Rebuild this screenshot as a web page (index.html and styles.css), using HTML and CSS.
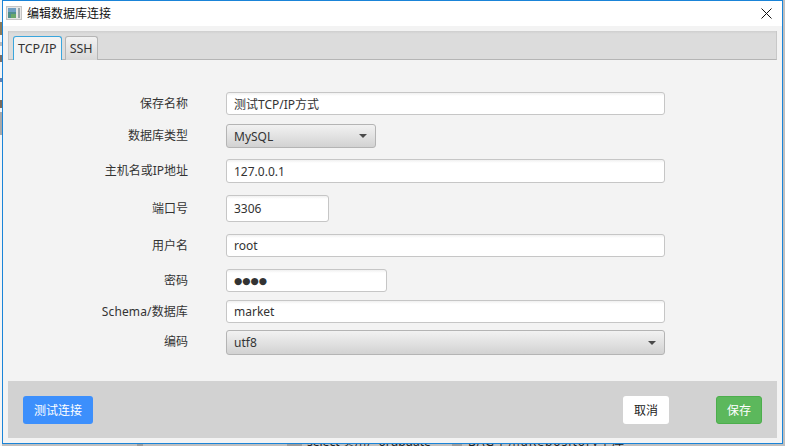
FILE: index.html
```html
<!DOCTYPE html>
<html lang="zh">
<head>
<meta charset="utf-8">
<title>编辑数据库连接</title>
<link rel="stylesheet" href="styles.css">
</head>
<body>
<div class="desktop" aria-hidden="true">
  <span class="bg-left bg-left-1"></span>
  <span class="bg-left bg-left-2"></span>
  <span class="bg-left bg-left-3"></span>
  <span class="bg-left bg-left-a"></span>
  <span class="bg-left bg-left-b"></span>
  <span class="bg-left bg-left-c"></span>
  <span class="bg-code bg-code-a">select 实用户orupdate</span>
  <span class="bg-code bg-code-b">BAG主用aRepository中库</span>
  <span class="bg-cell bg-cell-a"></span>
  <span class="bg-cell bg-cell-b"></span>
  <span class="bg-cell bg-cell-c"></span>
</div>
<div class="window">
  <header class="titlebar">
    <svg class="app-icon" width="16" height="16" viewBox="0 0 16 16">
      <rect x="0.5" y="1.5" width="15" height="13" fill="#e6e6e6" stroke="#c4c4c4"/>
      <rect x="2" y="3" width="8" height="10" fill="#4f8f8c"/>
      <rect x="2" y="3" width="8" height="4" fill="#6f9fc4"/>
      <rect x="5" y="9" width="5" height="4" fill="#6aa86a"/>
      <rect x="12" y="3" width="2" height="10" fill="#9aa6aa"/>
    </svg>
    <span class="title">编辑数据库连接</span>
    <svg class="close" width="11" height="11" viewBox="0 0 11 11">
      <path d="M0.5 0.5L10.5 10.5M10.5 0.5L0.5 10.5" stroke="#111" stroke-width="1" fill="none"/>
    </svg>
  </header>
  <main class="pane">
    <nav class="tabs">
      <span class="tab tab-active">TCP/IP</span>
      <span class="tab">SSH</span>
    </nav>
    <form class="form">
      <label class="label">保存名称</label>
      <div class="field f-full h23">测试TCP/IP方式</div>
      <label class="label">数据库类型</label>
      <div class="field combo f-type h24">MySQL<i class="arrow"></i></div>
      <label class="label">主机名或IP地址</label>
      <div class="field f-full h24">127.0.0.1</div>
      <label class="label l-port">端口号</label>
      <div class="field f-port h27">3306</div>
      <label class="label">用户名</label>
      <div class="field f-full h23">root</div>
      <label class="label">密码</label>
      <div class="field f-pass h23"><span class="dots">●●●●</span></div>
      <label class="label l-schema">Schema/数据库</label>
      <div class="field f-full h23">market</div>
      <label class="label">编码</label>
      <div class="field combo f-full h25">utf8<i class="arrow"></i></div>
    </form>
    <footer class="footer">
      <button class="btn btn-blue" type="button">测试连接</button>
      <button class="btn btn-white" type="button">取消</button>
      <button class="btn btn-green" type="button">保存</button>
    </footer>
  </main>
</div>
</body>
</html>
```
FILE: styles.css
```css
* { box-sizing: border-box; }
html, body { margin: 0; height: 446px; overflow: hidden; }
body {
  position: relative;
  background: #bfbfbf;
  font-family: "Noto Sans", "Noto Sans CJK SC", sans-serif;
  font-size: 12px;
  color: #333;
}
.desktop { position: absolute; inset: 0; overflow: hidden; }
.desktop::before { content: ""; position: absolute; left: 0; top: 0; width: 2px; height: 446px; background: #f4f4f4; }
.bg-left { position: absolute; left: 0; width: 2px; }
.bg-left-1 { top: 22px; height: 13px; background: #8a7a5a; }
.bg-left-2 { top: 42px; height: 4px; background: #b8b8b8; }
.bg-left-3 { top: 55px; height: 7px; background: #7c6f66; }
.bg-left-a { top: 78px; height: 4px; background: #5f7fb0; }
.bg-left-b { top: 100px; height: 8px; background: #7a6a5a; }
.bg-left-c { top: 112px; height: 23px; background: #a9a9a9; }
.bg-code { position: absolute; top: 434px; font-size: 12px; line-height: 16px; color: #222; white-space: nowrap; }
.bg-code-a { left: 307px; }
.bg-code-b { left: 468px; letter-spacing: 1px; }
.bg-cell { position: absolute; top: 444px; height: 2px; background: #9c9c9c; }
.bg-cell-a { left: 137px; width: 6px; }
.bg-cell-b { left: 287px; width: 15px; }
.bg-cell-c { left: 452px; width: 10px; }

.window {
  position: relative;
  display: flex;
  flex-direction: column;
  width: 781px;
  height: 444px;
  margin-left: 2px;
  border: 1px solid #1a84d8;
  background: #f3f3f3;
}
.titlebar {
  display: flex;
  align-items: center;
  height: 25px;
  padding: 0 10px 1px 3px;
  background: #fff;
}
.app-icon { flex: none; }
.title {
  margin-left: 5px;
  font-size: 12px;
  color: #111;
}
.close { margin-left: auto; }

.pane {
  flex: 1;
  display: flex;
  flex-direction: column;
  padding: 5px;
  min-height: 0;
}
.tabs {
  display: flex;
  align-items: flex-end;
  gap: 3px;
  height: 29px;
  padding-left: 4px;
  background: linear-gradient(#cfcfcf, #dcdcdc 3px);
  border: solid #c8c8c8;
  border-width: 0 1px;
  border-bottom: 1px solid #b5b5b5;
}
.tab {
  height: 24px;
  margin-bottom: -1px;
  padding: 0 4px;
  line-height: 24px;
  font-size: 12.5px;
  color: #333;
  border: 1px solid #b5b5b5;
  border-bottom: 0;
  border-radius: 3px 3px 0 0;
  background: linear-gradient(#f2f2f2, #d8d8d8);
}
.tab-active {
  border-color: #3aa5dc;
  background: #f3f3f3;
}

.form {
  flex: 1;
  display: grid;
  grid-template-columns: 180px 1fr;
  grid-template-rows: 32px 35px 36px 39px 35px 31px 30px 25px;
  column-gap: 38px;
  align-items: start;
  padding-top: 32px;
}
.label {
  font-size: 12px;
  line-height: 23px;
  text-align: right;
  color: #333;
}
.l-port { line-height: 27px; }
.l-schema { letter-spacing: 0.12px; }
.field {
  display: flex;
  align-items: center;
  padding: 0 7px;
  background: linear-gradient(#f0f0f0, #fff 3px);
  border: 1px solid #c6c6c6;
  border-radius: 3px;
  color: #333;
}
.h23 { height: 23px; }
.h24 { height: 24px; }
.h25 { height: 25px; }
.h27 { height: 27px; }
.f-full { width: 439px; }
.f-type { width: 150px; }
.f-port { width: 103px; }
.f-pass { width: 161px; }
.combo {
  justify-content: space-between;
  background: linear-gradient(#f2f2f2, #d2d2d2);
  border-color: #b4b4b4;
  padding-right: 8px;
}
.arrow {
  width: 0;
  height: 0;
  border: solid transparent;
  border-width: 4px 4px 0;
  border-top-color: #4a4a4a;
}
.dots { font: 9.5px "DejaVu Sans", sans-serif; color: #333; }

.footer {
  display: flex;
  align-items: center;
  height: 57px;
  padding: 0 15px;
  background: #d2d2d2;
}
.btn {
  height: 28px;
  padding: 0;
  border: 1px solid transparent;
  border-radius: 3px;
  font: 12px "Noto Sans CJK SC", sans-serif;
}
.btn-blue { width: 70px; background: #3c8ffc; color: #fff; }
.btn-white { width: 46px; margin-left: auto; background: #fff; color: #222; }
.btn-green { width: 46px; margin-left: 47px; background: #5cb85c; border-color: #4cae4c; color: #fff; }
```
